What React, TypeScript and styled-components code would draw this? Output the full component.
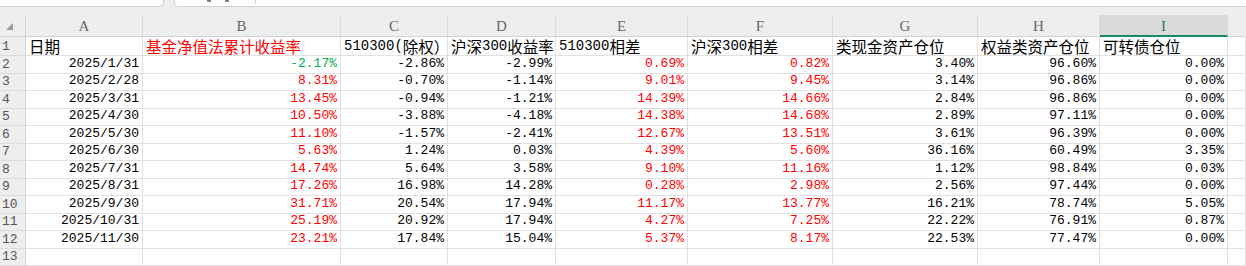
import styled, { createGlobalStyle } from 'styled-components'

const GlobalStyle = createGlobalStyle`
  html, body {
    margin: 0;
    padding: 0;
    background: #ffffff;
  }
  body {
    font-family: "Liberation Mono", "Noto Sans CJK SC", monospace;
  }
`

const COLS = ['A', 'B', 'C', 'D', 'E', 'F', 'G', 'H', 'I']
const ACTIVE_COL = 'I'

const HEADERS = [
  '日期',
  '基金净值法累计收益率',
  '510300(除权）',
  '沪深300收益率',
  '510300相差',
  '沪深300相差',
  '类现金资产仓位',
  '权益类资产仓位',
  '可转债仓位'
]

// columns whose numbers get red / green by sign
const TONED = [1, 4, 5]

const ROWS: string[][] = [
  ['2025/1/31', '-2.17%', '-2.86%', '-2.99%', '0.69%', '0.82%', '3.40%', '96.60%', '0.00%'],
  ['2025/2/28', '8.31%', '-0.70%', '-1.14%', '9.01%', '9.45%', '3.14%', '96.86%', '0.00%'],
  ['2025/3/31', '13.45%', '-0.94%', '-1.21%', '14.39%', '14.66%', '2.84%', '96.86%', '0.00%'],
  ['2025/4/30', '10.50%', '-3.88%', '-4.18%', '14.38%', '14.68%', '2.89%', '97.11%', '0.00%'],
  ['2025/5/30', '11.10%', '-1.57%', '-2.41%', '12.67%', '13.51%', '3.61%', '96.39%', '0.00%'],
  ['2025/6/30', '5.63%', '1.24%', '0.03%', '4.39%', '5.60%', '36.16%', '60.49%', '3.35%'],
  ['2025/7/31', '14.74%', '5.64%', '3.58%', '9.10%', '11.16%', '1.12%', '98.84%', '0.03%'],
  ['2025/8/31', '17.26%', '16.98%', '14.28%', '0.28%', '2.98%', '2.56%', '97.44%', '0.00%'],
  ['2025/9/30', '31.71%', '20.54%', '17.94%', '11.17%', '13.77%', '16.21%', '78.74%', '5.05%'],
  ['2025/10/31', '25.19%', '20.92%', '17.94%', '4.27%', '7.25%', '22.22%', '76.91%', '0.87%'],
  ['2025/11/30', '23.21%', '17.84%', '15.04%', '5.37%', '8.17%', '22.53%', '77.47%', '0.00%']
]

type Tone = 'plain' | 'up' | 'down'

const toneOf = (col: number, value: string): Tone => {
  if (!TONED.includes(col)) return 'plain'
  return value.startsWith('-') ? 'down' : 'up'
}

// SimSun-like look: half-width latin at 13px, CJK a little larger
const renderMixed = (text: string) =>
  text.split(/([\u4e00-\u9fff\uff08\uff09]+)/).map((part, i) =>
    /[\u4e00-\u9fff\uff08\uff09]/.test(part) ? <Han key={i}>{part}</Han> : part
  )

const App = () => {
  const bodyRows = [HEADERS, ...ROWS]

  return (
    <Page>
      <GlobalStyle />
      <TopBar>
        <NameBox />
        <FormulaBar>
          <FxIcons>
            <Tick />
            <Tick />
          </FxIcons>
          <FormulaDivider />
        </FormulaBar>
      </TopBar>
      <Band />
      <Sheet>
        <Corner>
          <CornerMark />
        </Corner>
        {COLS.map((c) => (
          <ColHead key={c} $active={c === ACTIVE_COL}>
            {c}
          </ColHead>
        ))}
        <ColHead $active={false} $last />

        {bodyRows.map((row, r) => (
          <Row key={r}>
            <RowHead>{r + 1}</RowHead>
            {row.map((value, c) => {
              const isHeader = r === 0
              const tone: Tone = isHeader ? (c === 1 ? 'up' : 'plain') : toneOf(c, value)
              return (
                <Cell
                  key={c}
                  $align={isHeader ? 'left' : 'right'}
                  $tone={tone}
                  $tall={isHeader}
                >
                  {renderMixed(value)}
                </Cell>
              )
            })}
            <Cell $align="left" $tone="plain" $tall={r === 0} />
          </Row>
        ))}

        <Row>
          <RowHead>{bodyRows.length + 1}</RowHead>
          {COLS.map((c) => (
            <Cell key={c} $align="left" $tone="plain" />
          ))}
          <Cell $align="left" $tone="plain" />
        </Row>
      </Sheet>
    </Page>
  )
}

export default App

const Page = styled.div`
  width: 1246px;
  height: 266px;
  overflow: hidden;
  display: flex;
  flex-direction: column;
  background: #eeeeee;
`

const TopBar = styled.div`
  height: 7px;
  display: flex;
  gap: 10px;
  flex-shrink: 0;
`

const NameBox = styled.div`
  width: 164px;
  background: #ffffff;
  border: 1px solid #cfcfcf;
  border-top: none;
  border-left: none;
  border-radius: 0 0 5px 0;
  box-sizing: border-box;
`

const FormulaBar = styled.div`
  flex: 1;
  display: flex;
  align-items: flex-start;
  background: #ffffff;
  border: 1px solid #cfcfcf;
  border-top: none;
  border-right: none;
  border-radius: 0 0 0 5px;
  box-sizing: border-box;
  padding-left: 32px;
`

const FxIcons = styled.div`
  display: flex;
  gap: 14px;
  width: 48px;
`

const Tick = styled.span`
  width: 4px;
  height: 2px;
  background: #7a7a7a;
  border-radius: 0 0 1px 1px;
`

const FormulaDivider = styled.span`
  width: 1px;
  height: 4px;
  background: #d0d0d0;
`

const Band = styled.div`
  height: 8px;
  flex-shrink: 0;
  background: #eeeeee;
`

const Sheet = styled.div`
  flex: 1;
  display: grid;
  grid-template-columns: 26px 117px 198px 107px 108px 132px 145px 145px 122px 128px 1fr;
  grid-template-rows: 22px 19px repeat(11, 17.5px) 1fr;
  background: #ffffff;
  overflow: hidden;
`

const Row = styled.div`
  display: contents;
`

const Corner = styled.div`
  position: relative;
  background: #eeeeee;
  border-right: 1px solid #d2d2d2;
  border-bottom: 1px solid #d2d2d2;
`

const CornerMark = styled.span`
  position: absolute;
  left: 6px;
  top: 8px;
  width: 0;
  height: 0;
  border-left: 7px solid transparent;
  border-bottom: 7px solid #9a9a9a;
`

const ColHead = styled.div<{ $active: boolean; $last?: boolean }>`
  display: flex;
  align-items: center;
  justify-content: center;
  font-family: "Liberation Serif", serif;
  font-size: 15px;
  color: ${({ $active }) => ($active ? '#1d7d53' : '#666666')};
  background: ${({ $active }) => ($active ? '#dadada' : '#eeeeee')};
  border-right: 1px solid ${({ $last }) => ($last ? 'transparent' : '#dcdcdc')};
  border-bottom: ${({ $active }) => ($active ? '2px solid #1a8a5a' : '1px solid #d2d2d2')};
  box-sizing: border-box;
  padding-top: 2px;
`

const RowHead = styled.div`
  display: flex;
  align-items: flex-end;
  padding: 0 0 1px 2px;
  font-family: "Liberation Mono", monospace;
  font-size: 13px;
  line-height: 15px;
  color: #555555;
  background: #eeeeee;
  border-right: 1px solid #d2d2d2;
  border-bottom: 1px solid #dcdcdc;
  box-sizing: border-box;
`

const Cell = styled.div<{ $align: 'left' | 'right'; $tone: Tone; $tall?: boolean }>`
  display: flex;
  align-items: flex-end;
  justify-content: ${({ $align }) => ($align === 'right' ? 'flex-end' : 'flex-start')};
  padding: 0 3px 1px;
  font-family: "Liberation Mono", "Noto Sans CJK SC", monospace;
  font-size: ${({ $tall }) => ($tall ? '14px' : '13px')};
  line-height: 16px;
  white-space: nowrap;
  color: ${({ $tone }) => ($tone === 'up' ? '#ff0000' : $tone === 'down' ? '#00b050' : '#000000')};
  border-right: 1px solid #e1e1e1;
  border-bottom: 1px solid #e1e1e1;
  box-sizing: border-box;
`

const Han = styled.span`
  font-family: "Noto Sans CJK SC", sans-serif;
  font-size: 15.5px;
  line-height: 16px;
`
